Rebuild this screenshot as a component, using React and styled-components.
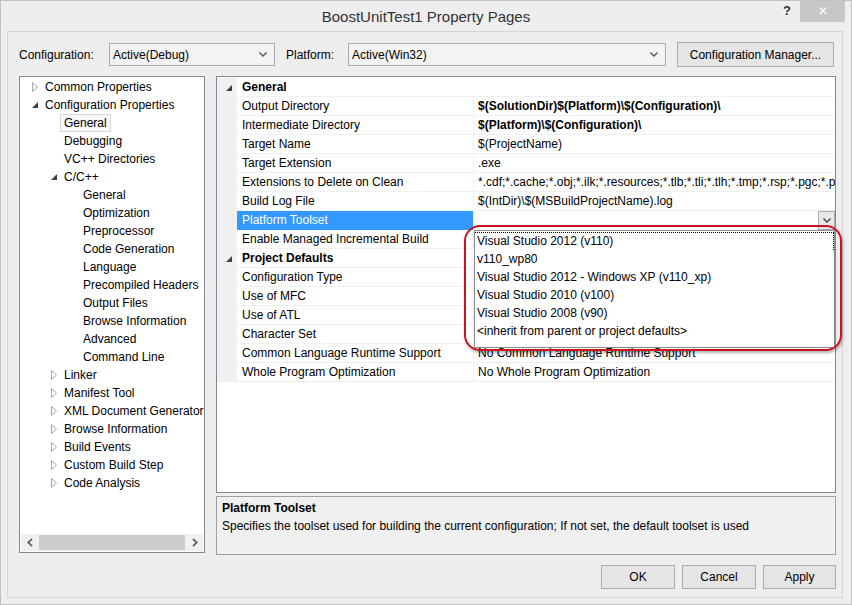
import React from "react";
import styled, { createGlobalStyle } from "styled-components";

const GlobalStyle = createGlobalStyle`
  html, body { margin: 0; padding: 0; }
  body {
    font-family: "Liberation Sans", Arial, sans-serif;
    font-size: 12px;
    color: #000;
    background: #eeeeee;
  }
  * { box-sizing: border-box; }
`;

const treeItems = [
  { label: "Common Properties", level: 0, arrow: "closed" },
  { label: "Configuration Properties", level: 0, arrow: "open" },
  { label: "General", level: 1, selected: true },
  { label: "Debugging", level: 1 },
  { label: "VC++ Directories", level: 1 },
  { label: "C/C++", level: 1, arrow: "open" },
  { label: "General", level: 2 },
  { label: "Optimization", level: 2 },
  { label: "Preprocessor", level: 2 },
  { label: "Code Generation", level: 2 },
  { label: "Language", level: 2 },
  { label: "Precompiled Headers", level: 2 },
  { label: "Output Files", level: 2 },
  { label: "Browse Information", level: 2 },
  { label: "Advanced", level: 2 },
  { label: "Command Line", level: 2 },
  { label: "Linker", level: 1, arrow: "closed" },
  { label: "Manifest Tool", level: 1, arrow: "closed" },
  { label: "XML Document Generator", level: 1, arrow: "closed" },
  { label: "Browse Information", level: 1, arrow: "closed" },
  { label: "Build Events", level: 1, arrow: "closed" },
  { label: "Custom Build Step", level: 1, arrow: "closed" },
  { label: "Code Analysis", level: 1, arrow: "closed" },
];

const gridRows = [
  { category: "General" },
  { name: "Output Directory", value: "$(SolutionDir)$(Platform)\\$(Configuration)\\", bold: true },
  { name: "Intermediate Directory", value: "$(Platform)\\$(Configuration)\\", bold: true },
  { name: "Target Name", value: "$(ProjectName)" },
  { name: "Target Extension", value: ".exe" },
  {
    name: "Extensions to Delete on Clean",
    value: "*.cdf;*.cache;*.obj;*.ilk;*.resources;*.tlb;*.tli;*.tlh;*.tmp;*.rsp;*.pgc;*.pgd;*.meta",
  },
  { name: "Build Log File", value: "$(IntDir)\\$(MSBuildProjectName).log" },
  { name: "Platform Toolset", value: "", selected: true },
  { name: "Enable Managed Incremental Build", value: "" },
  { category: "Project Defaults" },
  { name: "Configuration Type", value: "" },
  { name: "Use of MFC", value: "" },
  { name: "Use of ATL", value: "" },
  { name: "Character Set", value: "" },
  { name: "Common Language Runtime Support", value: "No Common Language Runtime Support" },
  { name: "Whole Program Optimization", value: "No Whole Program Optimization" },
];

const toolsets = [
  "Visual Studio 2012 (v110)",
  "v110_wp80",
  "Visual Studio 2012 - Windows XP (v110_xp)",
  "Visual Studio 2010 (v100)",
  "Visual Studio 2008 (v90)",
  "<inherit from parent or project defaults>",
];

const Chevron = ({ color = "#555" }) => (
  <svg width="8" height="5" viewBox="0 0 8 5">
    <polyline points="0.5,0.5 4,4 7.5,0.5" fill="none" stroke={color} strokeWidth="1.4" />
  </svg>
);

const ClosedArrow = () => (
  <svg width="6" height="10" viewBox="0 0 6 10">
    <polygon points="0.5,0.5 5.5,5 0.5,9.5" fill="none" stroke="#a6a6a6" strokeWidth="1" />
  </svg>
);

const OpenArrow = () => (
  <svg width="6" height="6" viewBox="0 0 6 6">
    <polygon points="6,0 6,6 0,6" fill="#404040" />
  </svg>
);

const ScrollArrow = ({ dir }) => (
  <svg width="6" height="9" viewBox="0 0 6 9">
    <polyline
      points={dir === "left" ? "5,0.8 1.2,4.5 5,8.2" : "1,0.8 4.8,4.5 1,8.2"}
      fill="none"
      stroke="#606060"
      strokeWidth="1.8"
    />
  </svg>
);

export default function App() {
  return (
    <>
      <GlobalStyle />
      <Window>
        <TitleBar>
          <Title>BoostUnitTest1 Property Pages</Title>
          <Controls>
            <Help>?</Help>
            <Close>✕</Close>
          </Controls>
        </TitleBar>
        <Frame>
          <Toolbar>
            <Label width={90}>Configuration:</Label>
            <Select width={166}>
              <span>Active(Debug)</span>
              <Chevron />
            </Select>
            <Label width={62} gap={11}>Platform:</Label>
            <Select width={318}>
              <span>Active(Win32)</span>
              <Chevron />
            </Select>
            <Button width={157} gap={11}>Configuration Manager...</Button>
          </Toolbar>
          <Main>
            <Tree>
              <TreeList>
                {treeItems.map((item, i) => (
                  <TreeRow key={i} level={item.level}>
                    <ArrowBox>
                      {item.arrow === "closed" && <ClosedArrow />}
                      {item.arrow === "open" && <OpenArrow />}
                    </ArrowBox>
                    <TreeLabel selected={item.selected}>{item.label}</TreeLabel>
                  </TreeRow>
                ))}
              </TreeList>
              <HScroll>
                <ScrollBtn><ScrollArrow dir="left" /></ScrollBtn>
                <ScrollThumb />
                <ScrollBtn><ScrollArrow dir="right" /></ScrollBtn>
              </HScroll>
            </Tree>
            <RightColumn>
              <Grid>
                {gridRows.map((row, i) =>
                  row.category ? (
                    <GridRow key={i}>
                      <Gutter><OpenArrow /></Gutter>
                      <CategoryCell>{row.category}</CategoryCell>
                    </GridRow>
                  ) : (
                    <GridRow key={i}>
                      <Gutter />
                      <NameCell selected={row.selected}>{row.name}</NameCell>
                      <ValueCell bold={row.bold}>
                        <ValueText>{row.value}</ValueText>
                        {row.selected && (
                          <>
                            <DropButton><Chevron color="#444" /></DropButton>
                            <DropList>
                              {toolsets.map((t, j) => (
                                <DropItem key={j} focused={j === 0}>{t}</DropItem>
                              ))}
                            </DropList>
                            <Annotation />
                          </>
                        )}
                      </ValueCell>
                    </GridRow>
                  )
                )}
              </Grid>
              <Description>
                <DescTitle>Platform Toolset</DescTitle>
                <div>Specifies the toolset used for building the current configuration; If not set, the default toolset is used</div>
              </Description>
            </RightColumn>
          </Main>
          <Footer>
            <Button width={74}>OK</Button>
            <Button width={74}>Cancel</Button>
            <Button width={73}>Apply</Button>
          </Footer>
        </Frame>
      </Window>
    </>
  );
}

const Window = styled.div`
  width: 852px;
  height: 605px;
  border: 1px solid #c2c2c2;
  background: #eeeeee;
  display: flex;
  flex-direction: column;
  overflow: hidden;
`;

const TitleBar = styled.div`
  height: 30px;
  flex-shrink: 0;
  display: grid;
  grid-template-columns: 1fr auto 1fr;
  align-items: start;
`;

const Title = styled.div`
  grid-column: 2;
  font-size: 15px;
  line-height: 31px;
  color: #333;
`;

const Controls = styled.div`
  grid-column: 3;
  justify-self: end;
  display: flex;
  align-items: flex-start;
  margin-right: 6px;
`;

const Help = styled.div`
  width: 26px;
  height: 20px;
  line-height: 20px;
  font-size: 13px;
  font-weight: bold;
  color: #333;
  text-align: center;
`;

const Close = styled.div`
  width: 45px;
  height: 21px;
  background: #c7c7c7;
  color: #fff;
  font-size: 12px;
  line-height: 21px;
  text-align: center;
`;

const Frame = styled.div`
  flex: 1;
  margin: 0 8px 6px 6px;
  border: 1px solid #d6d6d6;
  padding: 10px 6px 7px 11px;
  display: flex;
  flex-direction: column;
`;

const Toolbar = styled.div`
  display: flex;
  align-items: center;
  height: 25px;
`;

const Label = styled.div`
  width: ${({ width }) => width}px;
  margin-left: ${({ gap }) => gap || 0}px;
  white-space: nowrap;
`;

const Select = styled.div`
  width: ${({ width }) => width}px;
  height: 23px;
  border: 1px solid #acacac;
  background: #f3f3f3;
  display: flex;
  align-items: center;
  justify-content: space-between;
  padding: 0 7px 0 3px;
`;

const Button = styled.div`
  width: ${({ width }) => width}px;
  height: ${({ width }) => (width > 100 ? 25 : 24)}px;
  margin-left: ${({ gap }) => gap || 0}px;
  border: 1px solid #acacac;
  background: #e5e5e5;
  display: flex;
  align-items: center;
  justify-content: center;
`;

const Main = styled.div`
  display: flex;
  gap: 11px;
  margin-top: 9px;
  height: 479px;
`;

const Tree = styled.div`
  width: 186px;
  height: 477px;
  border: 1px solid #828790;
  background: #fff;
  display: flex;
  flex-direction: column;
  overflow: hidden;
`;

const TreeList = styled.div`
  flex: 1;
  padding-top: 1px;
`;

const TreeRow = styled.div`
  height: 18px;
  display: flex;
  align-items: center;
  padding-left: ${({ level }) => 9 + level * 19}px;
  white-space: nowrap;
`;

const ArrowBox = styled.div`
  width: 16px;
  flex-shrink: 0;
  display: flex;
  align-items: center;
  padding-left: 3px;
`;

const TreeLabel = styled.span`
  line-height: 16px;
  padding: 0 3px;
  margin-left: -4px;
  border: 1px solid ${({ selected }) => (selected ? "#d9d9d9" : "transparent")};
  background: ${({ selected }) => (selected ? "#f7f7f7" : "transparent")};
`;

const HScroll = styled.div`
  height: 17px;
  flex-shrink: 0;
  background: #f0f0f0;
  display: flex;
  align-items: center;
  margin: 0 1px 1px 1px;
`;

const ScrollBtn = styled.div`
  width: 17px;
  display: flex;
  justify-content: center;
`;

const ScrollThumb = styled.div`
  flex: 1;
  height: 15px;
  background: #cdcdcd;
  margin: 0 1px;
`;

const RightColumn = styled.div`
  width: 620px;
  display: flex;
  flex-direction: column;
  gap: 3px;
`;

const Grid = styled.div`
  height: 417px;
  border: 1px solid #828790;
  background: #fff;
  padding-top: 1px;
`;

const GridRow = styled.div`
  display: grid;
  grid-template-columns: 20px 237px 1fr;
  height: 19px;
`;

const Gutter = styled.div`
  background: #f0f0f0;
  display: flex;
  align-items: center;
  justify-content: center;
  padding-left: 4px;
`;

const CategoryCell = styled.div`
  grid-column: 2 / 4;
  font-weight: bold;
  line-height: 18px;
  padding-left: 5px;
  border-bottom: 1px solid #f0f0f0;
`;

const NameCell = styled.div`
  line-height: 18px;
  padding-left: 5px;
  white-space: nowrap;
  border-right: 1px solid #f0f0f0;
  border-bottom: 1px solid #f0f0f0;
  background: ${({ selected }) => (selected ? "#3399ff" : "#fff")};
  color: ${({ selected }) => (selected ? "#fff" : "#000")};
`;

const ValueCell = styled.div`
  position: relative;
  display: flex;
  line-height: 18px;
  border-bottom: 1px solid #f0f0f0;
  font-weight: ${({ bold }) => (bold ? "bold" : "normal")};
  min-width: 0;
`;

const ValueText = styled.div`
  flex: 1;
  padding-left: 4px;
  white-space: nowrap;
  overflow: hidden;
`;

const DropButton = styled.div`
  width: 17px;
  height: 19px;
  border: 1px solid #acacac;
  background: #e8e8e8;
  display: flex;
  align-items: center;
  justify-content: center;
`;

const DropList = styled.div`
  position: absolute;
  top: 19px;
  left: 0;
  right: 0;
  height: 118px;
  background: #fff;
  border: 1px solid #8c8c8c;
  padding-top: 1px;
  z-index: 2;
`;

const DropItem = styled.div`
  height: 18px;
  line-height: 17px;
  padding-left: 2px;
  white-space: nowrap;
  border-top: 1px dotted ${({ focused }) => (focused ? "#000" : "transparent")};
  border-right: 1px dotted ${({ focused }) => (focused ? "#000" : "transparent")};
`;

const Annotation = styled.div`
  position: absolute;
  left: -10px;
  right: -7px;
  top: 14px;
  height: 126px;
  border: 2px solid #c8141e;
  border-radius: 16px;
  box-shadow: 1px 2px 3px rgba(0, 0, 0, 0.3);
  z-index: 3;
  pointer-events: none;
`;

const Description = styled.div`
  flex: 1;
  border: 1px solid #a0a0a0;
  background: #f0f0f0;
  padding: 2px 5px;
  line-height: 18px;
`;

const DescTitle = styled.div`
  font-weight: bold;
`;

const Footer = styled.div`
  display: flex;
  justify-content: flex-end;
  gap: 7px;
  margin-top: 10px;
`;
